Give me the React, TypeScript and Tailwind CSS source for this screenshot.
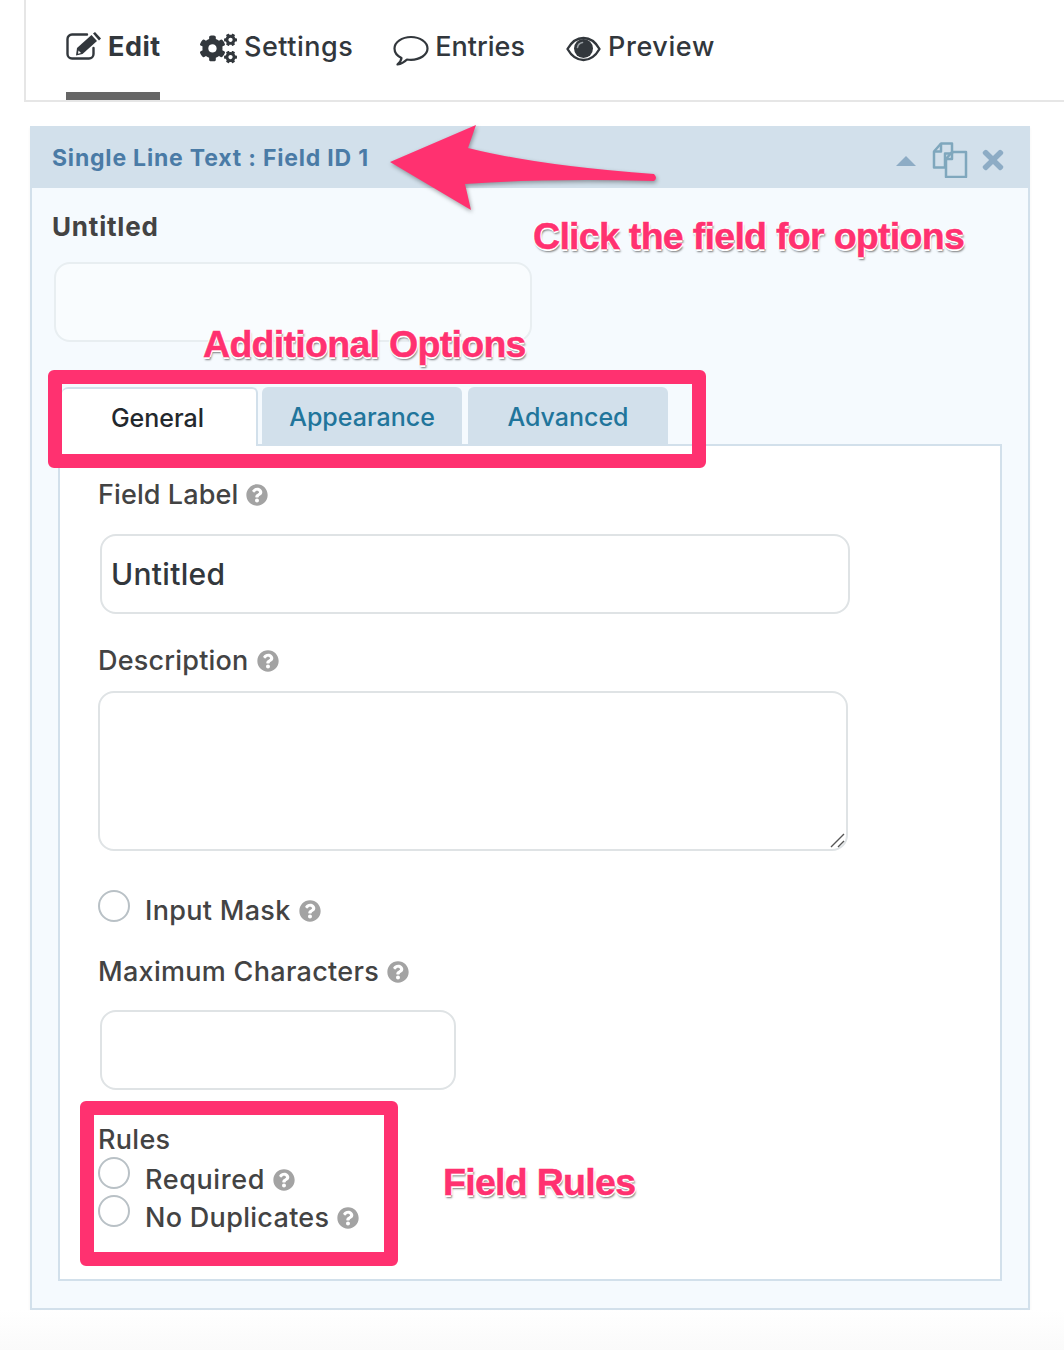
import { FaCogs, FaQuestionCircle, FaTimes } from "react-icons/fa";

const labelShadow =
  "font-['Liberation_Sans',sans-serif] font-bold text-[#ff3170] absolute whitespace-nowrap tracking-[-0.7px] leading-[44px] text-[37.5px] [-webkit-text-stroke:0.5px_#ff3170] [text-shadow:1.5px_0_0_#fff,-1.5px_0_0_#fff,0_-1.5px_0_#fff,0_1.5px_0_#fff,1px_2.5px_2px_#00000080]";

const Help = () => <FaQuestionCircle className="text-[#a3a3a3] ml-2 shrink-0" size={22} />;

const Radio = () => (
  <span className="block w-8 h-8 rounded-full border-2 border-[#b9c1c6] bg-white shrink-0" />
);

const EditIcon = () => (
  <svg width="36" height="30" viewBox="0 0 36 30" className="shrink-0 mt-[2px]">
    <path d="M21 2.500H6a4.500 4.500 0 0 0-4.500 4.500v15A4.500 4.500 0 0 0 6 26.500h17a4.500 4.500 0 0 0 4.500-4.500v-6" fill="none" stroke="#32373c" strokeWidth="2.4" strokeLinecap="round" />
    <path d="M11 16 25.500 3l5.500 6L16.500 22 10 23.500z" fill="#32373c" />
    <path d="M27 1.500 29 0l6 6.500-2 2z" fill="#32373c" />
    <path d="M12.500 18.500l2.500 2.500-3 .8z" fill="#fff" />
  </svg>
);

const CommentIcon = () => (
  <svg width="36" height="31" viewBox="0 0 36 31" className="shrink-0 mt-[5px]" fill="none" stroke="#32373c" strokeWidth="2.2" strokeLinejoin="round">
    <path d="M18 2C9 2 1.500 7 1.500 13.500c0 4 2.800 7.500 7 9.500-.4 2.800-2 5-4 6.500 3.500-.5 7-2.500 9.500-5 1.300.2 2.700.3 4 .3 9 0 16.500-5 16.500-11.300S27 2 18 2z" />
  </svg>
);

const EyeIcon = () => (
  <svg width="35" height="26" viewBox="0 0 35 26" className="shrink-0 mt-[6px]">
    <path d="M1.500 13C5.500 6 11 2 17.500 2s12 4 16 11c-4 7-9.500 11-16 11S5.500 20 1.500 13z" fill="none" stroke="#32373c" strokeWidth="2.400" strokeLinejoin="round" />
    <circle cx="17.500" cy="12.500" r="9.500" fill="#32373c" />
    <path d="M11.500 11.500a6 6 0 0 1 5-5" fill="none" stroke="#9aa0a5" strokeWidth="1.600" strokeLinecap="round" />
  </svg>
);

export default function App() {
  return (
    <div className="relative w-[1064px] h-[1352px] bg-white overflow-hidden text-[#434343] font-['Inter',sans-serif]">
      <nav className="ml-6 h-[102px] border-l-2 border-b-2 border-[#e6e6e6] flex items-start pl-10 text-[27px] text-[#32373c] font-medium tracking-[0.5px]">
        <div className="h-[100px] w-[94px] border-b-8 border-[#666] flex items-start pt-[30px] gap-[6px] font-bold">
          <EditIcon />
          <span className="leading-[34px]">Edit</span>
        </div>
        <div className="flex items-start pt-[30px] ml-10 gap-[7px]">
          <FaCogs size={37} className="shrink-0" />
          <span className="leading-[34px]">Settings</span>
        </div>
        <div className="flex items-start pt-[30px] ml-10 gap-[6px]">
          <CommentIcon />
          <span className="leading-[34px] tracking-[0px]">Entries</span>
        </div>
        <div className="flex items-start pt-[30px] ml-[41px] gap-[7px]">
          <EyeIcon />
          <span className="leading-[34px] tracking-[0.6px]">Preview</span>
        </div>
      </nav>

      <section className="ml-[30px] mt-6 w-[1000px] h-[1184px] bg-[#f5fafe] border-r-2 border-b-2 border-l-2 border-[#d2e0eb] shadow-[0_2px_3px_#0000000d]">
        <header className="h-[62px] -mx-[2px] bg-[#d2e0eb] flex items-center pl-[22px] pr-[22px]">
          <span className="text-[23px] font-bold text-[#4a7ba6] tracking-[0.8px] mt-[2px]">Single Line Text : Field ID 1</span>
          <div className="ml-auto flex items-center mt-[6px]">
            <span className="w-0 h-0 border-x-[10px] border-x-transparent border-b-[10px] border-b-[#8dacc5] mt-[2px]" />
            <svg width="36" height="36" viewBox="0 0 36 36" className="ml-[16px] -mt-[1px]" fill="none" stroke="#7fa7bd" strokeWidth="2.5" strokeLinejoin="round">
              <path d="M9 1.500h11v10h-7v14H2V9.500z" />
              <path d="M9 1.500v8H2" />
              <path d="M20 10h14v25H14V17z" />
              <path d="M20 10v7h-6" />
            </svg>
            <FaTimes size={30} className="text-[#8dacc5] ml-[10px]" />
          </div>
        </header>

        <div className="pl-5 pt-[23px]">
          <h3 className="text-[26px] font-bold leading-[32px] tracking-[0.8px]">Untitled</h3>
          <div className="ml-[2px] mt-[19px] w-[478px] h-20 rounded-2xl border-2 border-[#e8eef1] bg-[#f9fcfe]" />
        </div>

        <div className="flex mt-[45px] pl-[30px] text-[25px] font-medium h-[57px] items-stretch">
          <div className="w-[196px] bg-white rounded-t-md border-t-2 border-r-2 border-[#d2e0eb] flex items-center justify-center text-[#23282d] relative z-10 -mb-[2px] pt-[3px] pr-[3px]">General</div>
          <div className="ml-1 w-[200px] bg-[#d2e0eb] rounded-t-md flex items-center justify-center text-[#21759b] pt-[5px]">Appearance</div>
          <div className="ml-[6px] w-[200px] bg-[#d2e0eb] rounded-t-md flex items-center justify-center text-[#21759b] pt-[5px]">Advanced</div>
        </div>

        <div className="ml-[26px] w-[944px] h-[837px] bg-white border-2 border-[#d2e0eb] pl-[38px] text-[27px] font-medium tracking-[0.3px]">
          <div className="flex items-center h-8 mt-[33px] tracking-[0.1px]">Field Label<Help /></div>
          <div className="ml-[2px] mt-[23px] w-[750px] h-20 rounded-2xl border-2 border-[#dfe3e5] flex items-center pl-[9px] text-[30px] text-[#32373c]">Untitled</div>
          <div className="flex items-center h-8 mt-[31px] tracking-[0.2px]">Description<Help /></div>
          <div className="relative mt-[14px] w-[750px] h-40 rounded-2xl border-2 border-[#dfe3e5]">
            <svg width="16" height="16" viewBox="0 0 16 16" className="absolute right-0 bottom-0" stroke="#555" strokeWidth="1.4">
              <path d="M1 14 14 1M8 14l6-6" />
            </svg>
          </div>
          <div className="flex mt-[39px]">
            <Radio />
            <div className="flex items-center h-8 ml-[15px] mt-[5px]">Input Mask<Help /></div>
          </div>
          <div className="flex items-center h-8 mt-[29px]">Maximum Characters<Help /></div>
          <div className="ml-[2px] mt-[22px] w-[356px] h-20 rounded-2xl border-2 border-[#dfe3e5]" />
          <div className="h-8 mt-[34px] leading-8">Rules</div>
          <div className="flex h-[38px] mt-[1px]">
            <Radio />
            <div className="flex items-center h-8 ml-[15px] mt-[7px] tracking-[0.6px]">Required<Help /></div>
          </div>
          <div className="flex h-[38px]">
            <Radio />
            <div className="flex items-center h-8 ml-[15px] mt-[7px]">No Duplicates<Help /></div>
          </div>
        </div>
      </section>

      <div className="h-10 bg-gradient-to-b from-white to-[#fafafa]" />

      {/* annotations */}
      <svg width="300" height="100" viewBox="0 0 300 100" className="absolute left-[380px] top-[120px] drop-shadow-[1px_2px_2px_#00000059]">
        <path d="M10 42 96 5 88 28Q160 46 274 54q4 4 0 7Q170 58 85 64L91 90z" fill="#ff3170" />
      </svg>
      <div className={labelShadow + " left-[533px] top-[214px]"}>Click the field for options</div>
      <div className={labelShadow + " left-[203px] top-[322px]"}>Additional Options</div>
      <div className={labelShadow + " left-[443px] top-[1160px]"}>Field Rules</div>
      <div className="absolute left-[48px] top-[370px] w-[658px] h-[98px] rounded-md border-[14px] border-[#ff3170]" />
      <div className="absolute left-[80px] top-[1101px] w-[318px] h-[165px] rounded-md border-[14px] border-[#ff3170]" />
    </div>
  );
}
